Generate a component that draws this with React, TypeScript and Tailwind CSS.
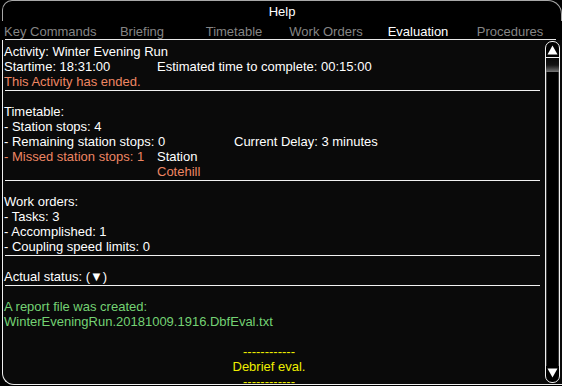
import type { ReactNode } from 'react'

const tabs = ['Key Commands', 'Briefing', 'Timetable', 'Work Orders', 'Evaluation', 'Procedures']

function Row({ children, className = '' }: { children?: ReactNode; className?: string }) {
    return <div className={`h-[15px] leading-[15px] whitespace-nowrap flex ${className}`}>{children}</div>
}

function Sep() {
    return (
        <div className="h-[15px] pt-[1px] pl-[1px]">
            <div className="h-px bg-[#f2f2f2]" />
        </div>
    )
}

export default function App() {
    return (
        <div className="w-[562px] h-[386px] overflow-hidden bg-black text-white text-[13px] font-['Liberation_Sans',Arial,sans-serif]">
            {/* Title bar */}
            <div className="ml-[2px] h-[21px] border-t border-x border-[#a8a8a8] rounded-tl-[10px] rounded-tr-[14px] pt-[3px] text-center leading-[15px]">
                Help
            </div>

            {/* Tabs */}
            <div className="pt-[3px] pl-[4px] grid grid-cols-[repeat(6,92px)] h-[18px] leading-[15px]">
                {tabs.map((t) => (
                    <div key={t} className={`text-center whitespace-nowrap ${t === 'Evaluation' ? 'text-white' : 'text-[#858585]'}`}>
                        {t}
                    </div>
                ))}
            </div>
            <div className="ml-[5px] w-[551px] h-px bg-[#e8e8e8]" />

            {/* Body */}
            <div className="ml-[2px] h-[345px] flex border-l border-b border-[#f0f0f0] rounded-bl-[12px] bg-[#0a0a0a] overflow-hidden">
                <div className="w-[537px] pl-[1px] pt-[4px] shrink-0">
                    <Row>Activity: Winter Evening Run</Row>
                    <Row>
                        <span className="w-[153px]">Startime: 18:31:00</span>
                        <span>Estimated time to complete: 00:15:00</span>
                    </Row>
                    <Row className="text-[#ee8663]">This Activity has ended.</Row>
                    <Sep />
                    <Row>Timetable:</Row>
                    <Row>- Station stops: 4</Row>
                    <Row>
                        <span className="w-[230px]">- Remaining station stops: 0</span>
                        <span>Current Delay: 3 minutes</span>
                    </Row>
                    <Row>
                        <span className="w-[153px] text-[#ee8663]">- Missed station stops: 1</span>
                        <span>Station</span>
                    </Row>
                    <Row>
                        <span className="w-[153px]" />
                        <span className="text-[#ee8663]">Cotehill</span>
                    </Row>
                    <Sep />
                    <Row>Work orders:</Row>
                    <Row>- Tasks: 3</Row>
                    <Row>- Accomplished: 1</Row>
                    <Row>- Coupling speed limits: 0</Row>
                    <Sep />
                    <Row>Actual status: (▼)</Row>
                    <Sep />
                    <Row className="text-[#74d274]">A report file was created:</Row>
                    <Row className="text-[#74d274]">WinterEveningRun.20181009.1916.DbfEval.txt</Row>
                    <Row />
                    <Row className="justify-center pr-[6px] text-[#eeee00]">------------</Row>
                    <Row className="justify-center pr-[6px] text-[#eeee00]">Debrief eval.</Row>
                    <Row className="justify-center pr-[6px] text-[#eeee00]">------------</Row>
                </div>

                {/* Scrollbar */}
                <div className="ml-[5px] mt-[1px] w-[15px] h-[342px] flex flex-col border border-[#f0f0f0] rounded-t-[7px] rounded-b-[7px] bg-black overflow-hidden">
                    <div className="h-[16px] border-b border-[#f0f0f0] flex items-center justify-center">
                        <svg width="11" height="10" viewBox="0 0 11 10">
                            <path d="M5.5 0.5 L10.5 9.5 L0.5 9.5 Z" fill="#ffffff" />
                        </svg>
                    </div>
                    <div className="h-[14px] bg-gradient-to-b from-[#080808] via-[#141414] to-[#7a7a7a]" />
                    <div className="flex-1 border-x border-[#3a3a3a]" />
                    <div className="h-[16px] flex items-center justify-center pb-[2px]">
                        <svg width="11" height="10" viewBox="0 0 11 10">
                            <path d="M0.5 0.5 L10.5 0.5 L5.5 9.5 Z" fill="#ffffff" />
                        </svg>
                    </div>
                </div>
            </div>
        </div>
    )
}
